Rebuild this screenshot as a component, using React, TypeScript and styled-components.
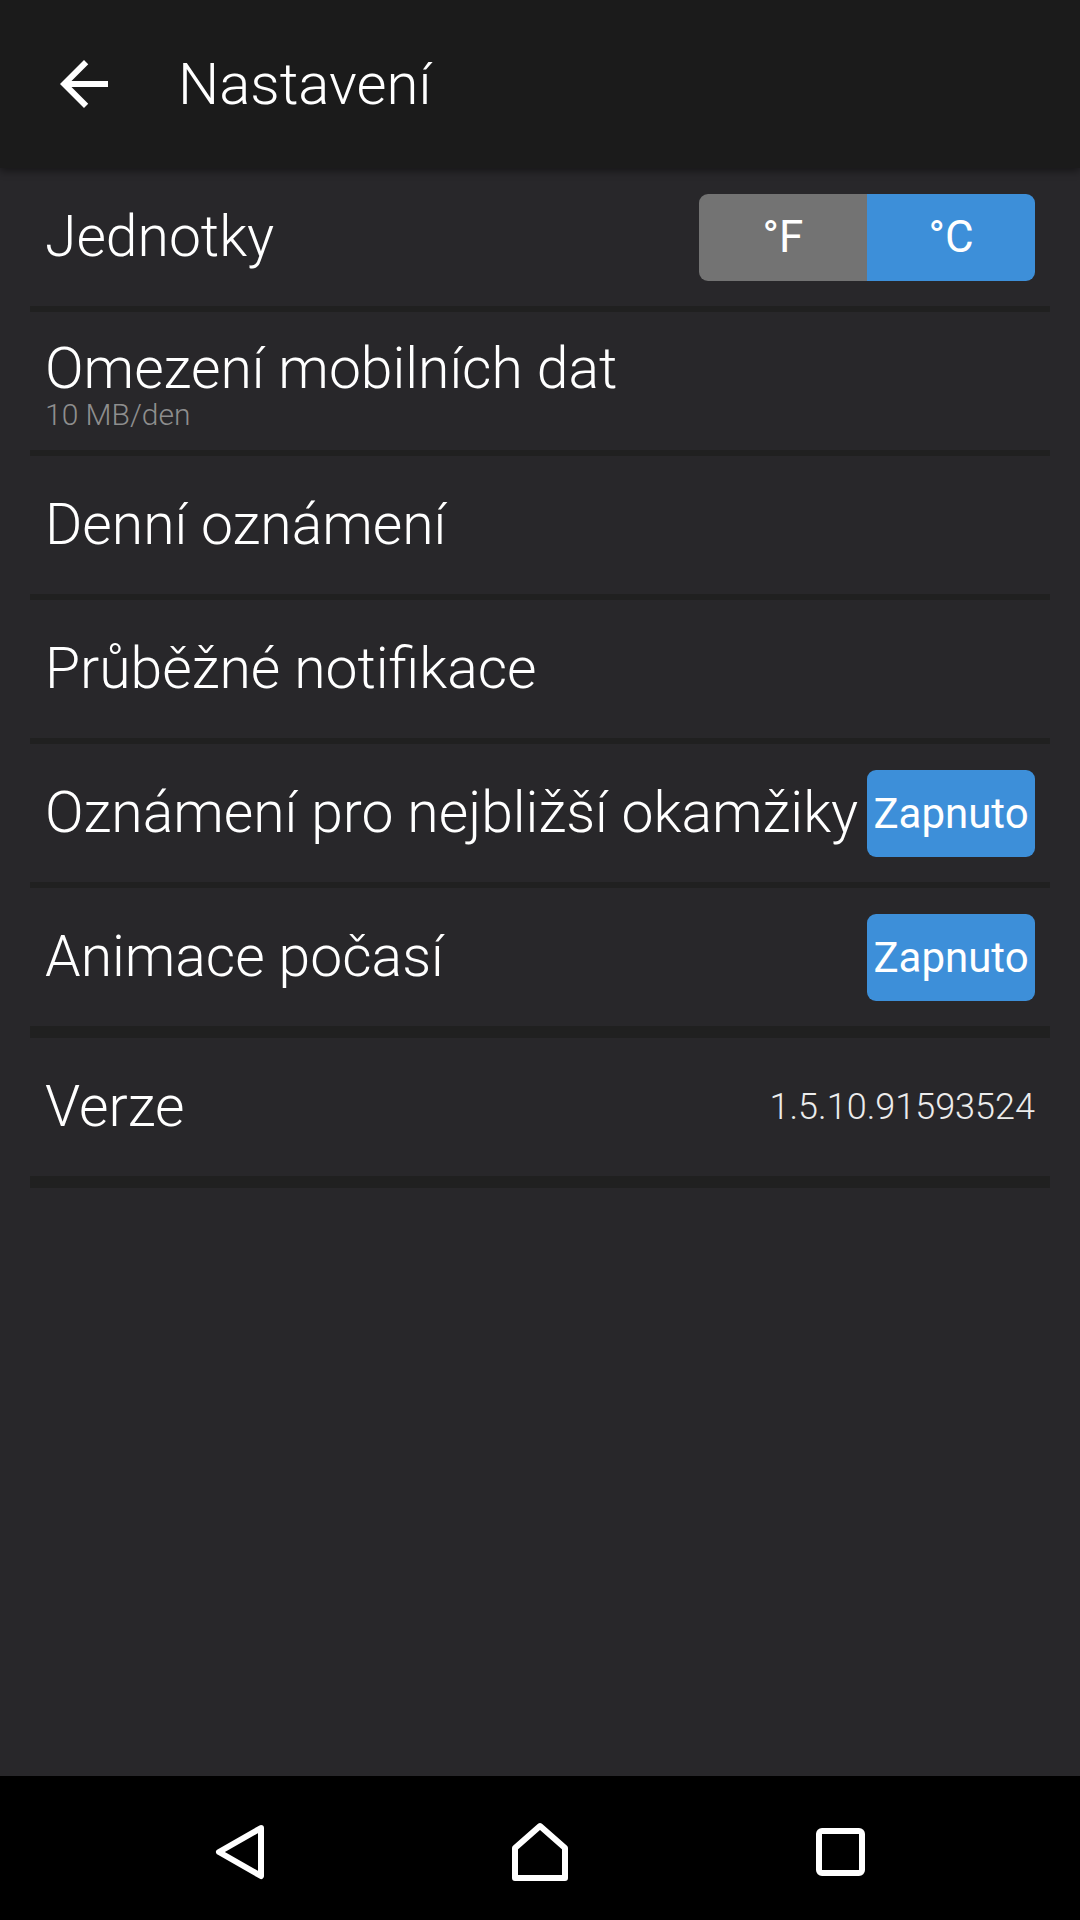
import React from "react";
import styled, { createGlobalStyle } from "styled-components";

const GlobalStyle = createGlobalStyle`
  html, body {
    margin: 0;
    padding: 0;
    background: #28272a;
  }
  * { box-sizing: border-box; }
`;

const Screen = styled.div`
  width: 1080px;
  height: 1920px;
  display: flex;
  flex-direction: column;
  background: #28272a;
  font-family: Roboto, "Noto Sans", sans-serif;
  color: #ffffff;
  overflow: hidden;
`;

const AppBar = styled.header`
  position: relative;
  z-index: 1;
  height: 168px;
  flex: none;
  display: flex;
  align-items: center;
  background: #1b1b1b;
  box-shadow: 0 3px 8px rgba(0, 0, 0, 0.45);
`;

const BackButton = styled.button`
  width: 72px;
  height: 72px;
  margin-left: 48px;
  padding: 0;
  border: 0;
  background: transparent;
  display: flex;
  align-items: center;
  justify-content: center;
  color: #ffffff;
`;

const Title = styled.h1`
  margin: 0 0 0 58px;
  font-size: 58px;
  font-weight: 300;
  line-height: 1;
  letter-spacing: 0;
`;

const Content = styled.main`
  flex: 1;
  padding: 0 30px;
`;

const Row = styled.div`
  height: 138px;
  display: flex;
  align-items: center;
  justify-content: space-between;
  padding: 0 15px;
`;

const Divider = styled.div<{ $thick?: boolean }>`
  height: ${(p) => (p.$thick ? 12 : 6)}px;
  background: #202020;
`;

const Label = styled.div`
  font-size: 57px;
  font-weight: 300;
  line-height: 66px;
  white-space: nowrap;
  flex: none;
`;

const LabelStack = styled.div`
  display: flex;
  flex-direction: column;
  margin-top: 7px;

  & > ${Label} {
    line-height: 60px;
  }
`;

const SubLabel = styled.div`
  font-size: 30px;
  font-weight: 300;
  line-height: 32px;
  color: #8e8e8e;
  white-space: nowrap;
`;

const Segmented = styled.div`
  display: flex;
  width: 336px;
  height: 87px;
  border-radius: 9px;
  overflow: hidden;
  flex: none;
`;

const Segment = styled.div<{ $active?: boolean }>`
  flex: 1;
  display: flex;
  align-items: center;
  justify-content: center;
  background: ${(p) => (p.$active ? "#3d8fd9" : "#737373")};
  font-size: 44px;
  font-weight: 400;
  color: #ffffff;
`;

const ToggleButton = styled.div`
  width: 168px;
  height: 87px;
  flex: none;
  border-radius: 9px;
  background: #3d8fd9;
  display: flex;
  align-items: center;
  justify-content: center;
  font-size: 42px;
  font-weight: 400;
  color: #ffffff;
  white-space: nowrap;
`;

const Value = styled.div`
  font-size: 36px;
  font-weight: 300;
  color: #ececec;
  white-space: nowrap;
`;

const NavBar = styled.nav`
  height: 144px;
  flex: none;
  background: #000000;
  display: grid;
  grid-template-columns: repeat(3, 300px);
  justify-content: center;
  align-items: center;
  padding-top: 8px;
`;

const NavItem = styled.div`
  display: flex;
  align-items: center;
  justify-content: center;
`;

const ArrowBack = () => (
  <svg width="72" height="72" viewBox="0 0 24 24" fill="currentColor">
    <path d="M20 11H7.83l5.59-5.59L12 4l-8 8 8 8 1.41-1.41L7.83 13H20v-2z" />
  </svg>
);

const NavBack = () => (
  <svg width="60" height="60" viewBox="0 0 60 60" fill="none" stroke="#fff" strokeWidth="6" strokeLinejoin="round">
    <path d="M51 6 L9 30 L51 54 Z" />
  </svg>
);

const NavHome = () => (
  <svg width="60" height="62" viewBox="0 0 60 62" fill="none" stroke="#fff" strokeWidth="6" strokeLinejoin="round">
    <path d="M30 5 L55 27 L55 57 L5 57 L5 27 Z" />
  </svg>
);

const NavRecents = () => (
  <svg width="60" height="60" viewBox="0 0 60 60" fill="none" stroke="#fff" strokeWidth="6">
    <rect x="9" y="9" width="43" height="42" rx="3" />
  </svg>
);

export default function App() {
  return (
    <>
      <GlobalStyle />
      <Screen>
        <AppBar>
          <BackButton aria-label="Zpět">
            <ArrowBack />
          </BackButton>
          <Title>Nastavení</Title>
        </AppBar>
        <Content>
          <Row>
            <Label>Jednotky</Label>
            <Segmented>
              <Segment>°F</Segment>
              <Segment $active>°C</Segment>
            </Segmented>
          </Row>
          <Divider />
          <Row>
            <LabelStack>
              <Label>Omezení mobilních dat</Label>
              <SubLabel>10 MB/den</SubLabel>
            </LabelStack>
          </Row>
          <Divider />
          <Row>
            <Label>Denní oznámení</Label>
          </Row>
          <Divider />
          <Row>
            <Label>Průběžné notifikace</Label>
          </Row>
          <Divider />
          <Row>
            <Label>Oznámení pro nejbližší okamžiky</Label>
            <ToggleButton>Zapnuto</ToggleButton>
          </Row>
          <Divider />
          <Row>
            <Label>Animace počasí</Label>
            <ToggleButton>Zapnuto</ToggleButton>
          </Row>
          <Divider $thick />
          <Row>
            <Label>Verze</Label>
            <Value>1.5.10.91593524</Value>
          </Row>
          <Divider $thick />
        </Content>
        <NavBar>
          <NavItem>
            <NavBack />
          </NavItem>
          <NavItem>
            <NavHome />
          </NavItem>
          <NavItem>
            <NavRecents />
          </NavItem>
        </NavBar>
      </Screen>
    </>
  );
}
